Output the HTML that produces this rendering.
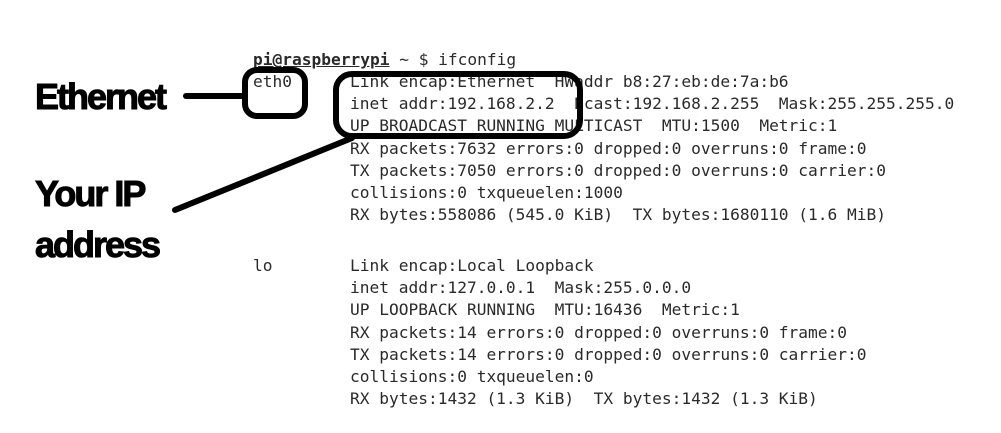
<!DOCTYPE html>
<html><head><meta charset="utf-8"><style>
html,body{margin:0;padding:0;background:#fff;width:1001px;height:433px;overflow:hidden;position:relative}
.t{position:absolute;font-family:"DejaVu Sans Mono","Liberation Mono",monospace;font-size:16.2px;color:#2a2a2a;white-space:pre;line-height:22.2px;letter-spacing:0px}
.h{position:absolute;font-family:"Liberation Sans",sans-serif;font-weight:bold;color:#000;font-size:36px;letter-spacing:-2px;line-height:1;-webkit-text-stroke:1px #000}
svg{position:absolute;left:0;top:0}
</style></head><body>
<div class="t" style="left:253px;top:49px"><b style="text-decoration:underline">pi@raspberrypi</b> ~ $ ifconfig</div>
<div class="t" style="left:253px;top:71px">eth0</div>
<div class="t" style="left:350px;top:71px">Link encap:Ethernet  HWaddr b8:27:eb:de:7a:b6
inet addr:192.168.2.2  Bcast:192.168.2.255  Mask:255.255.255.0
UP BROADCAST RUNNING MULTICAST  MTU:1500  Metric:1
RX packets:7632 errors:0 dropped:0 overruns:0 frame:0
TX packets:7050 errors:0 dropped:0 overruns:0 carrier:0
collisions:0 txqueuelen:1000
RX bytes:558086 (545.0 KiB)  TX bytes:1680110 (1.6 MiB)</div>
<div class="t" style="left:253px;top:255px">lo</div>
<div class="t" style="left:350px;top:255px">Link encap:Local Loopback
inet addr:127.0.0.1  Mask:255.0.0.0
UP LOOPBACK RUNNING  MTU:16436  Metric:1
RX packets:14 errors:0 dropped:0 overruns:0 frame:0
TX packets:14 errors:0 dropped:0 overruns:0 carrier:0
collisions:0 txqueuelen:0
RX bytes:1432 (1.3 KiB)  TX bytes:1432 (1.3 KiB)</div>
<div class="h" style="left:35px;top:79px">Ethernet</div>
<div class="h" style="left:35px;top:176px">Your IP</div>
<div class="h" style="left:35px;top:227px">address</div>
<svg width="1001" height="433" fill="none" stroke="#000" stroke-width="6" stroke-linecap="round">
<rect x="245" y="70" width="60" height="46" rx="12"/>
<rect x="336" y="74" width="244" height="62" rx="16"/>
<path d="M186 96 L244 96"/>
<path d="M352 138 L175 210"/>
</svg>
</body></html>
